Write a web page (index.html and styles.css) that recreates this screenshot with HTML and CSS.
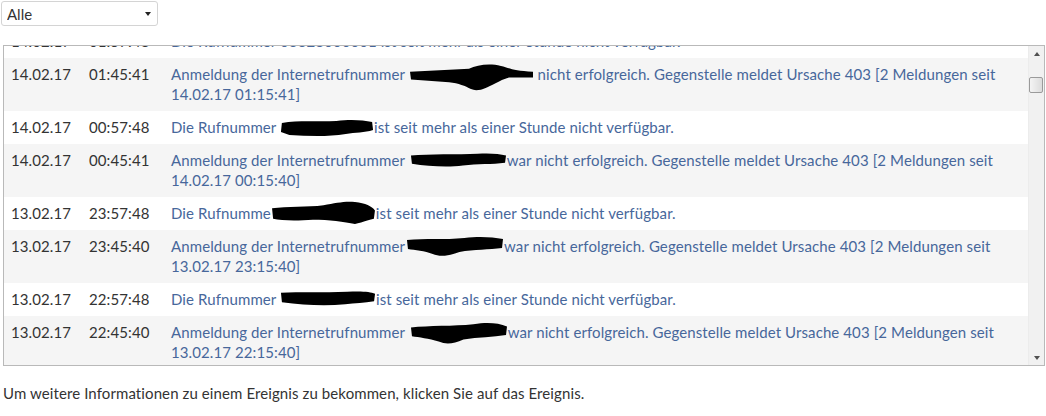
FILE: index.html
```html
<!DOCTYPE html>
<html lang="de">
<head>
<meta charset="utf-8">
<title>Ereignisse</title>
<link rel="stylesheet" href="styles.css">
</head>
<body>
<div class="page">
  <div class="filter">
    <select class="filter-select">
      <option>Alle</option>
    </select>
  </div>

  <div class="log">
    <div class="log-view">
      <div class="log-rows">
        <div class="row">
          <span class="date">14.02.17</span><span class="time">01:57:48</span>
          <span class="msg">Die Rufnummer 03328000001 ist seit mehr als einer Stunde nicht verfügbar.</span>
        </div>
        <div class="row">
          <span class="date">14.02.17</span><span class="time">01:45:41</span>
          <span class="msg">Anmeldung der Internetrufnummer <svg class="redact r1" viewBox="0 0 125 30" preserveAspectRatio="none"><path d="M1 9 L60 6 C68 2 80 0 92 3 C100 5 104 8 124 9 L124 15 L100 15 C90 18 82 24 76 26 C72 28 66 29 62 27 C56 24 50 21 40 20 L2 17 Z"/></svg> nicht erfolgreich. Gegenstelle meldet Ursache 403 [2 Meldungen seit 14.02.17 01:15:41]</span>
        </div>
        <div class="row">
          <span class="date">14.02.17</span><span class="time">00:57:48</span>
          <span class="msg">Die Rufnummer <svg class="redact r2" viewBox="0 0 100 20" preserveAspectRatio="none"><path d="M2 5 C20 2 40 4 60 3 C75 1 88 2 98 4 L99 12 C90 15 80 14 70 16 C50 19 30 18 10 17 L1 14 Z"/></svg>ist seit mehr als einer Stunde nicht verfügbar.</span>
        </div>
        <div class="row">
          <span class="date">14.02.17</span><span class="time">00:45:41</span>
          <span class="msg">Anmeldung der Internetrufnummer <svg class="redact r3" viewBox="0 0 100 20" preserveAspectRatio="none"><path d="M2 4 C20 2 50 3 70 2 C82 1 92 2 99 4 L98 12 C85 14 70 13 55 15 C40 17 20 16 3 13 Z"/></svg>war nicht erfolgreich. Gegenstelle meldet Ursache 403 [2 Meldungen seit 14.02.17 00:15:40]</span>
        </div>
        <div class="row">
          <span class="date">13.02.17</span><span class="time">23:57:48</span>
          <span class="msg">Die Rufnumme<svg class="redact r4" viewBox="0 0 100 24" preserveAspectRatio="none"><path d="M1 8 C15 6 35 7 50 5 C62 3 70 1 80 2 C90 3 96 6 99 10 L98 18 C90 20 85 22 80 23 C70 21 55 19 40 19 C25 20 10 20 2 18 Z"/></svg>ist seit mehr als einer Stunde nicht verfügbar.</span>
        </div>
        <div class="row">
          <span class="date">13.02.17</span><span class="time">23:45:40</span>
          <span class="msg">Anmeldung der Internetrufnummer<svg class="redact r5" viewBox="0 0 100 24" preserveAspectRatio="none"><path d="M2 6 C20 4 40 6 60 4 C75 2 88 3 99 5 L98 14 C85 16 70 15 55 18 C45 22 35 23 28 20 C20 17 10 16 3 15 Z"/></svg>war nicht erfolgreich. Gegenstelle meldet Ursache 403 [2 Meldungen seit 13.02.17 23:15:40]</span>
        </div>
        <div class="row">
          <span class="date">13.02.17</span><span class="time">22:57:48</span>
          <span class="msg">Die Rufnummer <svg class="redact r6" viewBox="0 0 100 20" preserveAspectRatio="none"><path d="M1 4 C20 3 45 4 70 3 C85 2 94 3 99 5 L98 13 C88 15 78 15 68 16 C48 18 25 17 2 14 Z"/></svg>ist seit mehr als einer Stunde nicht verfügbar.</span>
        </div>
        <div class="row">
          <span class="date">13.02.17</span><span class="time">22:45:40</span>
          <span class="msg">Anmeldung der Internetrufnummer <svg class="redact r7" viewBox="0 0 100 24" preserveAspectRatio="none"><path d="M2 6 C20 4 45 5 65 3 C80 1 90 2 99 5 L98 13 C85 15 70 15 55 17 C45 21 38 22 30 19 C20 16 10 15 3 14 Z"/></svg>war nicht erfolgreich. Gegenstelle meldet Ursache 403 [2 Meldungen seit 13.02.17 22:15:40]</span>
        </div>
      </div>
    </div>
    <div class="scrollbar">
      <div class="sb-btn"><span class="arrow-up"></span></div>
      <div class="sb-track">
        <div class="sb-thumb"></div>
      </div>
      <div class="sb-btn"><span class="arrow-down"></span></div>
    </div>
  </div>

  <p class="hint">Um weitere Informationen zu einem Ereignis zu bekommen, klicken Sie auf das Ereignis.</p>
</div>
</body>
</html>
```

FILE: styles.css
```css
html, body {
  margin: 0;
  padding: 0;
  background: #fff;
}

body {
  font-family: "Lato", "Liberation Sans", sans-serif;
  font-size: 15px;
  line-height: 20px;
  letter-spacing: 0.1px;
  color: #333;
}

.page {
  padding: 1px 1px 0 1px;
}

.filter {
  position: relative;
  width: 157px;
}

.filter::after {
  content: "";
  position: absolute;
  right: 7px;
  top: 11px;
  border-left: 3.5px solid transparent;
  border-right: 3.5px solid transparent;
  border-top: 4px solid #222;
}

.filter-select {
  appearance: none;
  -webkit-appearance: none;
  width: 157px;
  height: 25px;
  margin: 0;
  padding: 0 0 0 5px;
  border: 1px solid #d4d4d4;
  border-radius: 3px;
  background: #fff;
  font-family: inherit;
  font-size: 15px;
  color: #333;
}

.log {
  display: flex;
  margin: 19px 0 0 2px;
  height: 319px;
  border: 1px solid #b9b9b9;
}

.log-view {
  flex: 1;
  overflow: hidden;
}

.log-rows {
  margin-top: -21px;
}

.row {
  display: grid;
  grid-template-columns: 78px 82px 1fr;
  padding: 6px 20px 7px 7px;
}

.row:nth-child(even) {
  background: #f5f5f5;
}

.msg {
  color: #47679b;
}

.redact {
  display: inline-block;
  fill: #000;
}

.r1 { width: 125px; height: 29px; margin: -10px 0; vertical-align: -2px; }
.r2 { width: 94px; height: 20px; margin: -8px 0; vertical-align: 3px; }
.r3 { width: 98px; height: 18px; margin: -7px 0; vertical-align: 3px; }
.r4 { width: 105px; height: 25px; margin: -10px 0; vertical-align: 4px; }
.r5 { width: 99px; height: 24px; margin: -10px 0; vertical-align: 4px; }
.r6 { width: 96px; height: 19px; margin: -8px 0; vertical-align: 5px; }
.r7 { width: 99px; height: 26px; margin: -10px 0; vertical-align: 1px; }

.scrollbar {
  width: 15px;
  display: flex;
  flex-direction: column;
  background: #f1f1f1;
  border-left: 1px solid #ececec;
}

.sb-btn {
  height: 15px;
  display: flex;
  align-items: center;
  justify-content: center;
}

.arrow-up {
  border-left: 3.5px solid transparent;
  border-right: 3.5px solid transparent;
  border-bottom: 4px solid #505050;
}

.arrow-down {
  border-left: 3.5px solid transparent;
  border-right: 3.5px solid transparent;
  border-top: 4px solid #505050;
}

.sb-track {
  flex: 1;
  padding-top: 16px;
}

.sb-thumb {
  height: 14px;
  margin: 0 1px 0 0;
  border: 1px solid #9a9a9a;
  border-radius: 2px;
  background: linear-gradient(to right, #f4f4f4, #dcdcdc);
}

.hint {
  margin: 17px 0 0 2px;
}
```
